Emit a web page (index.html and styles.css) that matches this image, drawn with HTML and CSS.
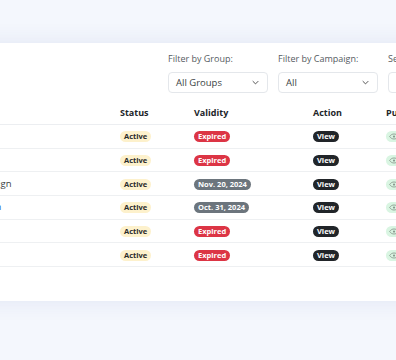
FILE: index.html
```html
<!DOCTYPE html>
<html>
<head>
<meta charset="utf-8">
<link rel="stylesheet" href="styles.css">
</head>
<body>
<div class="page">
  <div class="card">
    <div class="filters">
      <div class="filter">
        <div class="flabel">Filter by Group:</div>
        <div class="select"><span>All Groups</span><svg class="chev" viewBox="0 0 10 6" width="7" height="5"><path d="M1 1l4 4 4-4" fill="none" stroke="#444" stroke-width="1.3"/></svg></div>
      </div>
      <div class="filter">
        <div class="flabel">Filter by Campaign:</div>
        <div class="select"><span>All</span><svg class="chev" viewBox="0 0 10 6" width="7" height="5"><path d="M1 1l4 4 4-4" fill="none" stroke="#444" stroke-width="1.3"/></svg></div>
      </div>
      <div class="filter">
        <div class="flabel">Search:</div>
        <div class="select"><span>Search...</span></div>
      </div>
    </div>
    <div class="table">
      <div class="row head">
        <div class="cell name">Name</div>
        <div class="cell">Status</div>
        <div class="cell">Validity</div>
        <div class="cell">Action</div>
        <div class="cell">Public</div>
      </div>
      <div class="row">
        <div class="cell name">Summer Voucher</div>
        <div class="cell"><span class="badge active">Active</span></div>
        <div class="cell"><span class="badge expired">Expired</span></div>
        <div class="cell"><span class="badge view">View</span></div>
        <div class="cell"><span class="badge pub"><svg viewBox="0 0 16 10" width="10" height="7"><path d="M1 5c2-3 4.5-4 7-4s5 1 7 4c-2 3-4.5 4-7 4S3 8 1 5z" fill="none" stroke="#8a9a8f" stroke-width="1.4"/><circle cx="8" cy="5" r="1.8" fill="#8a9a8f"/></svg>Public</span></div>
      </div>
      <div class="row">
        <div class="cell name">Spring Voucher</div>
        <div class="cell"><span class="badge active">Active</span></div>
        <div class="cell"><span class="badge expired">Expired</span></div>
        <div class="cell"><span class="badge view">View</span></div>
        <div class="cell"><span class="badge pub"><svg viewBox="0 0 16 10" width="10" height="7"><path d="M1 5c2-3 4.5-4 7-4s5 1 7 4c-2 3-4.5 4-7 4S3 8 1 5z" fill="none" stroke="#8a9a8f" stroke-width="1.4"/><circle cx="8" cy="5" r="1.8" fill="#8a9a8f"/></svg>Public</span></div>
      </div>
      <div class="row">
        <div class="cell name">Black Friday's Campaign</div>
        <div class="cell"><span class="badge active">Active</span></div>
        <div class="cell"><span class="badge date">Nov. 20, 2024</span></div>
        <div class="cell"><span class="badge view">View</span></div>
        <div class="cell"><span class="badge pub"><svg viewBox="0 0 16 10" width="10" height="7"><path d="M1 5c2-3 4.5-4 7-4s5 1 7 4c-2 3-4.5 4-7 4S3 8 1 5z" fill="none" stroke="#8a9a8f" stroke-width="1.4"/><circle cx="8" cy="5" r="1.8" fill="#8a9a8f"/></svg>Public</span></div>
      </div>
      <div class="row">
        <div class="cell name link">Halloween Promotion</div>
        <div class="cell"><span class="badge active">Active</span></div>
        <div class="cell"><span class="badge date">Oct. 31, 2024</span></div>
        <div class="cell"><span class="badge view">View</span></div>
        <div class="cell"><span class="badge pub"><svg viewBox="0 0 16 10" width="10" height="7"><path d="M1 5c2-3 4.5-4 7-4s5 1 7 4c-2 3-4.5 4-7 4S3 8 1 5z" fill="none" stroke="#8a9a8f" stroke-width="1.4"/><circle cx="8" cy="5" r="1.8" fill="#8a9a8f"/></svg>Public</span></div>
      </div>
      <div class="row">
        <div class="cell name">Welcome Offer</div>
        <div class="cell"><span class="badge active">Active</span></div>
        <div class="cell"><span class="badge expired">Expired</span></div>
        <div class="cell"><span class="badge view">View</span></div>
        <div class="cell"><span class="badge pub"><svg viewBox="0 0 16 10" width="10" height="7"><path d="M1 5c2-3 4.5-4 7-4s5 1 7 4c-2 3-4.5 4-7 4S3 8 1 5z" fill="none" stroke="#8a9a8f" stroke-width="1.4"/><circle cx="8" cy="5" r="1.8" fill="#8a9a8f"/></svg>Public</span></div>
      </div>
      <div class="row">
        <div class="cell name">Loyalty Bonus</div>
        <div class="cell"><span class="badge active">Active</span></div>
        <div class="cell"><span class="badge expired">Expired</span></div>
        <div class="cell"><span class="badge view">View</span></div>
        <div class="cell"><span class="badge pub"><svg viewBox="0 0 16 10" width="10" height="7"><path d="M1 5c2-3 4.5-4 7-4s5 1 7 4c-2 3-4.5 4-7 4S3 8 1 5z" fill="none" stroke="#8a9a8f" stroke-width="1.4"/><circle cx="8" cy="5" r="1.8" fill="#8a9a8f"/></svg>Public</span></div>
      </div>
    </div>
  </div>
</div>
</body>
</html>
```
FILE: styles.css
```css
html, body {
  margin: 0;
  padding: 0;
}
body {
  background: #f4f7fd;
  font-family: "Open Sans", "DejaVu Sans", sans-serif;
  color: #212529;
  overflow: hidden;
  width: 396px;
  height: 360px;
}
.page {
  padding-top: 43px;
}
.card {
  margin-left: -300px;
  width: 820px;
  background: #fff;
  box-shadow: 0 0 22px rgba(40, 60, 140, 0.09);
  padding: 10px 0 34px;
  box-sizing: border-box;
}
.filters {
  display: flex;
  gap: 10px;
  padding-left: 468px;
}
.filter {
  width: 100px;
  flex: none;
}
.flabel {
  font-size: 9px;
  line-height: 12px;
  color: #555b61;
  margin-bottom: 7px;
  white-space: nowrap;
}
.select {
  height: 21px;
  box-sizing: border-box;
  border: 1px solid #e4e7eb;
  border-radius: 4px;
  display: flex;
  align-items: center;
  justify-content: space-between;
  padding: 0 8px 0 7px;
  font-size: 9.5px;
  color: #3a3f44;
}
.chev {
  display: block;
}
.table {
  margin-top: 9px;
}
.row {
  display: grid;
  grid-template-columns: 420px 74px 119px 73px 134px;
  height: 23.67px;
  border-bottom: 1px solid #eef0f2;
  box-sizing: border-box;
  align-items: center;
}
.row.head {
  height: 23px;
  border-bottom-color: #eceef1;
}
.head .cell {
  font-size: 9px;
  font-weight: 700;
  color: #212529;
}
.cell {
  font-size: 9.5px;
  white-space: nowrap;
  line-height: 12px;
}
.name {
  padding-left: 205px;
  color: #3a3f44;
}
.name.link {
  color: #1a5fd0;
}
.badge {
  display: inline-flex;
  align-items: center;
  height: 11px;
  padding: 0 4px;
  border-radius: 6px;
  font-size: 7.5px;
  font-weight: 700;
  line-height: 11px;
  vertical-align: middle;
}
.active {
  background: #fdf1cc;
  color: #2b2b2b;
}
.expired {
  background: #dc3545;
  color: #fff;
}
.date {
  background: #6c757d;
  color: #fff;
}
.view {
  background: #212529;
  color: #fff;
}
.pub {
  background: #d9f5e2;
  color: #1e7b40;
  gap: 3px;
  padding: 0 5px 0 3px;
}
```
